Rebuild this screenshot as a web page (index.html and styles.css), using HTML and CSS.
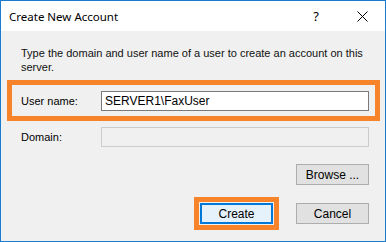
FILE: index.html
```html
<!DOCTYPE html>
<html lang="en">
<head>
    <meta charset="UTF-8">
    <title>Create New Account</title>
    <link rel="stylesheet" href="styles.css">
</head>
<body>
    <div class="window">
        <div class="titlebar">
            <div class="title">Create New Account</div>
            <div class="tb-btn help">?</div>
            <div class="tb-btn close">
                <svg width="11" height="11" viewBox="0 0 11 11">
                    <path d="M0.5 0.5 L10.5 10.5 M10.5 0.5 L0.5 10.5" stroke="#000" stroke-width="1" fill="none"/>
                </svg>
            </div>
        </div>

        <div class="content">
            <p class="intro">Type the domain and user name of a user to create an account on this server.</p>

            <div class="highlight user-row">
                <label class="field-label">User name:</label>
                <div class="textbox">SERVER1\FaxUser</div>
            </div>

            <div class="field-row">
                <label class="field-label">Domain:</label>
                <div class="textbox disabled"></div>
            </div>

            <div class="browse-row">
                <button class="btn">Browse ...</button>
            </div>

            <div class="actions">
                <div class="highlight btn-wrap">
                    <button class="btn default">Create</button>
                </div>
                <button class="btn">Cancel</button>
            </div>
        </div>
    </div>
</body>
</html>
```

FILE: styles.css
```css
body {
    margin: 0;
    font-family: 'Liberation Sans', Arial, sans-serif;
    font-size: 11px;
    color: #000;
}
.window {
    width: 386px;
    height: 242px;
    box-sizing: border-box;
    border: 1px solid #1b7bd0;
    display: flex;
    flex-direction: column;
}
.titlebar {
    height: 30px;
    background: #fff;
    display: flex;
    align-items: center;
}
.title {
    flex: 1;
    padding-left: 8px;
    font-family: 'Noto Sans', sans-serif;
    font-size: 11.5px;
}
.tb-btn {
    width: 46px;
    height: 30px;
    display: flex;
    align-items: center;
    justify-content: center;
}
.help {
    font-family: 'Noto Sans', sans-serif;
    font-size: 13px;
}
.content {
    flex: 1;
    background: #f0f0f0;
    padding-top: 15px;
}
.intro {
    margin: 0;
    padding: 0 20px 0 20px;
    line-height: 14px;
    color: #111;
}
.highlight {
    border: 5px solid #f7832a;
}
.user-row {
    margin: 6px 5px 0 6px;
    padding: 6px 6px 5px 9px;
    display: flex;
    align-items: center;
}
.field-row {
    margin-top: 6px;
    padding-left: 20px;
    display: flex;
    align-items: center;
}
.field-label {
    width: 80px;
}
.textbox {
    width: 268px;
    height: 20px;
    box-sizing: border-box;
    background: #fff;
    border: 1px solid #7a7a7a;
    padding-left: 3px;
    font-size: 12px;
    line-height: 18px;
}
.textbox.disabled {
    background: #f0f0f0;
    border-color: #cccccc;
}
.browse-row {
    display: flex;
    justify-content: flex-end;
    padding-right: 16px;
    margin-top: 17px;
}
.btn {
    width: 73px;
    height: 21px;
    box-sizing: border-box;
    background: #e1e1e1;
    border: 1px solid #adadad;
    font-family: 'Liberation Sans', Arial, sans-serif;
    font-size: 12px;
    color: #000;
    padding: 0;
}
.btn.default {
    background: #e5f1fb;
    border-color: #0078d7;
    box-shadow: inset 0 0 0 1px #0078d7;
}
.actions {
    display: flex;
    justify-content: flex-end;
    align-items: center;
    gap: 17px;
    padding-right: 16px;
    margin-top: 12px;
}
.btn-wrap {
    padding: 1px;
    display: flex;
}
```
